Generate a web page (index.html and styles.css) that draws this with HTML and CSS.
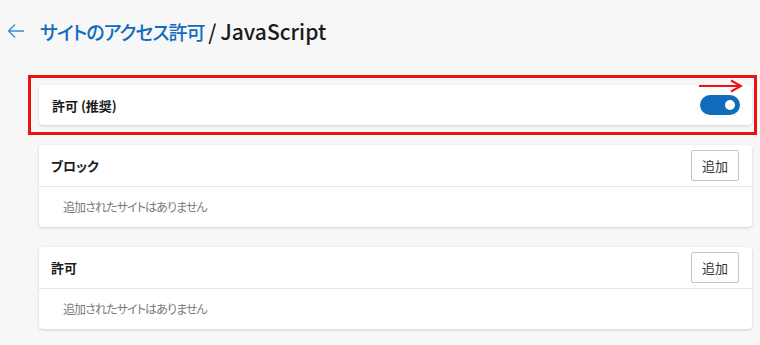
FILE: index.html
```html
<!DOCTYPE html>
<html lang="ja">
<head>
    <meta charset="UTF-8">
    <meta name="viewport" content="width=device-width, initial-scale=1.0">
    <title>サイトのアクセス許可 / JavaScript</title>
    <link rel="stylesheet" href="styles.css">
</head>
<body>
    <header class="page-header">
        <button class="back-btn" aria-label="戻る">
            <svg width="18" height="18" viewBox="0 0 18 18">
                <path d="M17 9H1.5M8 2.5L1.5 9L8 15.5" fill="none" stroke="#3a8ad6" stroke-width="1.3"/>
            </svg>
        </button>
        <h1 class="page-title"><span class="crumb">サイトのアクセス許可</span> / JavaScript</h1>
    </header>

    <main class="content">
        <div class="highlight">
            <section class="card toggle-card">
                <span class="card-label">許可 (推奨)</span>
                <label class="switch">
                    <input type="checkbox" checked>
                    <span class="switch-track"></span>
                </label>
            </section>
            <svg class="mark-arrow" width="44" height="14" viewBox="0 0 44 14">
                <path d="M0 7H42M32 1.5L42 7L32 12.5" fill="none" stroke="#ee1111" stroke-width="2"/>
            </svg>
        </div>

        <section class="card list-card">
            <div class="list-head">
                <span class="card-label">ブロック</span>
                <button class="add-btn">追加</button>
            </div>
            <div class="list-body">追加されたサイトはありません</div>
        </section>

        <section class="card list-card">
            <div class="list-head">
                <span class="card-label">許可</span>
                <button class="add-btn">追加</button>
            </div>
            <div class="list-body">追加されたサイトはありません</div>
        </section>
    </main>
</body>
</html>
```

FILE: styles.css
```css
body {
    margin: 0;
    background-color: #f7f7f7;
    font-family: "Noto Sans CJK JP", "Noto Sans", sans-serif;
    font-feature-settings: "palt";
    color: #1b1b1b;
}
.page-header {
    display: flex;
    align-items: center;
    height: 62px;
    padding-left: 7px;
}
.back-btn {
    background: none;
    border: none;
    padding: 0;
    width: 18px;
    height: 18px;
    margin-right: 15px;
    cursor: pointer;
}
.page-title {
    margin: 0;
    font-size: 21px;
    font-weight: 500;
    word-spacing: -1px;
    color: #1b1b1b;
}
.crumb {
    font-size: 19px;
    letter-spacing: -1px;
    color: #0f6cbd;
}
.content {
    width: 713px;
    padding-left: 39px;
    padding-top: 13px;
}
.highlight {
    position: relative;
    border: 3px solid #ee1111;
    padding: 7px 2px 7px 8px;
    margin: 0 -5px 10px -11px;
}
.mark-arrow {
    position: absolute;
    left: 668px;
    top: 1px;
}
.card {
    background-color: #fff;
    border-radius: 4px;
    box-shadow: 0 1px 3px rgba(0, 0, 0, 0.16);
}
.card-label {
    font-size: 13px;
    font-weight: 600;
}
.toggle-card {
    display: flex;
    justify-content: space-between;
    align-items: center;
    height: 40px;
    padding: 0 12px 0 13px;
}
.switch input {
    display: none;
}
.switch-track {
    display: block;
    position: relative;
    width: 40px;
    height: 20px;
    border-radius: 10px;
    background-color: #0f6cbd;
}
.switch-track::after {
    content: "";
    position: absolute;
    right: 5px;
    top: 5px;
    width: 10px;
    height: 10px;
    border-radius: 50%;
    background-color: #fff;
}
.list-card {
    margin-bottom: 20px;
}
.list-head {
    display: flex;
    justify-content: space-between;
    align-items: center;
    height: 41px;
    padding: 0 13px 0 12px;
    border-bottom: 1px solid #e5e5e5;
}
.add-btn {
    font-family: inherit;
    font-feature-settings: "palt";
    font-size: 13px;
    color: #333;
    background-color: #fff;
    border: 1px solid #c4c4c4;
    border-radius: 2px;
    width: 48px;
    height: 31px;
    padding: 0;
}
.list-body {
    height: 40px;
    line-height: 40px;
    padding-left: 24px;
    font-size: 12px;
    letter-spacing: -0.9px;
    color: #7a7a7a;
}
```
